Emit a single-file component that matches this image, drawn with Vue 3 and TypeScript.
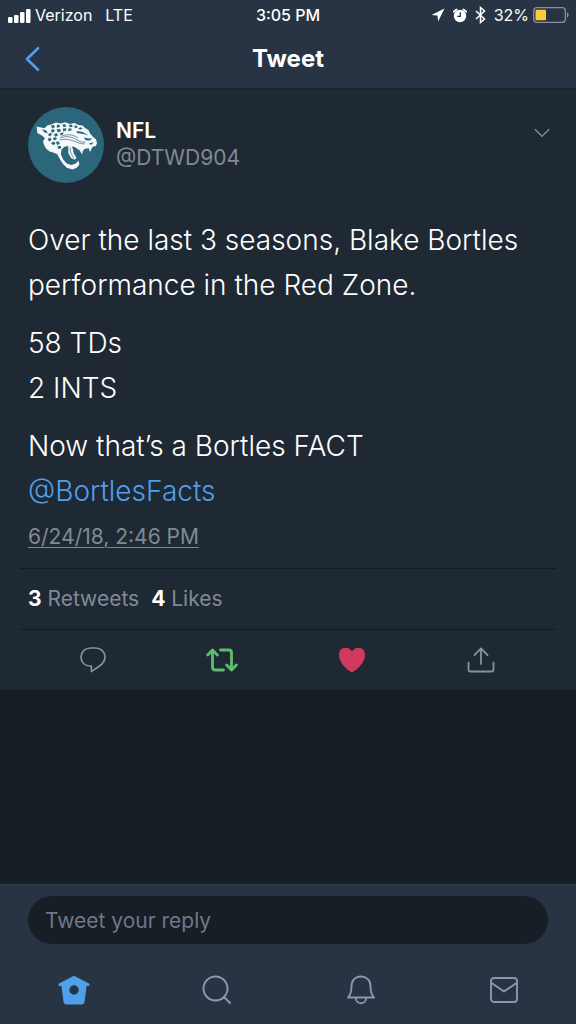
<script setup lang="ts">
import { ref } from 'vue'

interface Stat {
  count: number
  label: string
}

const stats: Stat[] = [
  { count: 3, label: 'Retweets' },
  { count: 4, label: 'Likes' },
]
const reply = ref('')
</script>

<template>
  <div class="screen">
    <header class="top">
      <div class="status">
        <div class="status-left">
          <svg class="signal" width="23" height="15" viewBox="0 0 23 15" aria-hidden="true">
            <rect x="0" y="9" width="4.5" height="6" rx="1.2" />
            <rect x="6" y="7" width="4.5" height="8" rx="1.2" />
            <rect x="12" y="4" width="4.5" height="11" rx="1.2" />
            <rect x="18" y="1" width="4.5" height="14" rx="1.2" />
          </svg>
          <span>Verizon</span>
          <span class="network">LTE</span>
        </div>
        <div class="clock">3:05 PM</div>
        <div class="status-right">
          <svg width="14" height="14" viewBox="0 0 14 14" aria-hidden="true">
            <path d="M13.5.5.5 7l6 .6.6 6z" fill="#fff" />
          </svg>
          <svg class="alarm" width="14" height="15" viewBox="0 0 14 15" aria-hidden="true">
            <circle cx="7" cy="8" r="6.2" fill="#fff" />
            <path d="M.8 3.8a9 9 0 0 1 2.800-2.300M13.200 3.800a9 9 0 0 0-2.800-2.300" fill="none" stroke="#fff" stroke-width="1.700" stroke-linecap="round" />
            <path d="M7.300 4.200v4.200H4.200" fill="none" stroke="#283444" stroke-width="1.300" />
          </svg>
          <svg class="bluetooth" width="11" height="18" viewBox="0 0 11 18" aria-hidden="true">
            <path d="M1 5l8.500 8L5.500 16.500v-15L9.500 5 1 13" fill="none" stroke="#fff" stroke-width="1.500" />
          </svg>
          <span>32%</span>
          <svg class="battery" width="36" height="16" viewBox="0 0 36 16" aria-hidden="true">
            <rect x=".7" y=".7" width="31.600" height="14.600" rx="3" fill="none" stroke="#8a929c" stroke-width="1.300" />
            <rect x="2.500" y="2.700" width="10.500" height="10.600" rx="1" fill="#fecb38" />
            <path d="M34 5.300q1.600.7 1.600 2.700T34 10.700z" fill="#8a929c" />
          </svg>
        </div>
      </div>
      <nav class="titlebar">
        <button class="back" type="button" aria-label="Back">
          <svg width="16" height="26" viewBox="0 0 16 26" aria-hidden="true">
            <path d="M14 2.200 3 13l11 10.800" fill="none" stroke="#4f9fea" stroke-width="2.600" stroke-linecap="round" stroke-linejoin="round" />
          </svg>
        </button>
        <h1>Tweet</h1>
      </nav>
    </header>

    <main class="content">
      <article class="tweet">
        <div class="author">
          <svg class="avatar" viewBox="24 20 229 229" role="img" aria-label="NFL avatar">
            <circle cx="138.500" cy="134.500" r="114.500" fill="#2b667a" />
            <path fill="#f4f8fa" d="M50 79l24 5 8-8 14-4 12-5 14 3 14-4 14 5 14-3 12 6 12 2 8 7 10 6 5 11 10 11 8 6 3 12-4 9-8 1-5 7-4 10-4-12-12 2-6 7-2 10-7-12-14-10-18-4-14 3-9 8-2 14 7 16 11 12 13 5 14-5 8-9 3 12-8 10-13 5-17-5-12-12-11-17-6-12-12-5-11-3-10-8-6-10-4-12 6-10-9-8-14-8z" />
            <path fill="#f4f8fa" d="M145 136l10 1 4 9 3 14 8 13-5 6-11-5-8-13z" />
            <g fill="#2b667a">
              <path d="M65 87l14 4 5 8-10-2zM93 76l9-2 3 7-8 4zM112 73l8 1-1 7-9 1zM128 73l9-1 2 7-8 2zM147 74l10-1 1 7-8 1zM164 75l9 3-1 6-8-2zM92 91l8-5 5 5-6 7zM110 87l11-1 2 7-9 4zM129 85l10-1 0 7-9 3zM146 85l10 0-2 6-9 2zM84 104l7-7 5 5-5 7zM102 102l9-3 4 6-9 5zM121 98l10-1-1 5-8 4zM83 117l7-5 5 6-6 7zM99 113l10-2 2 6-9 4zM93 129l9-5 5 5-6 6zM108 125l9-1 3 6-8 5zM112 139l9-3 4 7-8 4zM181 81l8 3-6 4-8-2z" />
              <path d="M171 92l18 3 17 11-15-5-20-3zM192 112l15 3 11-1-8 7-12-1zM209 129l13-3-5 6-7 2z" />
            </g>
            <path fill="none" stroke="#2b667a" stroke-width="2" d="M121 113c20-7 35-3 48 5s20 8 28 8M119 119c20-4 35 0 49 6s18 6 27 6M124 108c24-8 38-4 51 6" />
            <path fill="none" stroke="#2b667a" stroke-width="2" d="M151 142c0 14 4 23 12 32" />
          </svg>
          <div class="names">
            <strong>NFL</strong>
            <span>@DTWD904</span>
          </div>
          <button class="more" type="button" aria-label="More options">
            <svg width="16" height="10" viewBox="0 0 16 10" aria-hidden="true">
              <path d="M1.200 1.500 8 8.200l6.800-6.700" fill="none" stroke="#7d8996" stroke-width="1.500" stroke-linecap="round" stroke-linejoin="round" />
            </svg>
          </button>
        </div>

        <div class="body">
          <p>Over the last 3 seasons, Blake Bortles performance in the Red Zone.</p>
          <p>58 TDs<br />2 INTS</p>
          <p>Now that’s a Bortles FACT<br /><a href="#BortlesFacts">@BortlesFacts</a></p>
        </div>
        <div class="date"><a href="#tweet">6/24/18, 2:46 PM</a></div>

        <div class="stats">
          <span v-for="stat in stats" :key="stat.label"><b>{{ stat.count }}</b> {{ stat.label }}</span>
        </div>

        <div class="actions">
          <button type="button" aria-label="Reply">
            <svg width="26" height="26" viewBox="0 0 26 26" aria-hidden="true">
              <path d="M10.500 1h5C21 1 25 5 25 10c0 3.800-2.200 6.700-5.600 9-2.500 1.800-5.300 3.700-8 5.600V19H10C4.800 19 1 15.300 1 10.200S5 1 10.500 1z" fill="none" stroke="#8491a0" stroke-width="1.700" stroke-linejoin="round" />
            </svg>
          </button>
          <button type="button" aria-label="Retweet">
            <svg width="32" height="26" viewBox="0 0 32 26" aria-hidden="true">
              <g fill="none" stroke="#5dbb6d" stroke-width="2.900" stroke-linecap="round" stroke-linejoin="round">
                <path d="M1.700 8 6.500 3l4.800 5M6.500 4v16.300q0 2.700 2.700 2.700h8.300" />
                <path d="M30.300 18l-4.800 5-4.800-5M25.500 22V5.700Q25.500 3 22.800 3h-8.300" />
              </g>
            </svg>
          </button>
          <button type="button" aria-label="Like">
            <svg width="28" height="26" viewBox="0 0 28 26" aria-hidden="true">
              <path d="M14 4.300C15.600 1.900 18 .8 20.500.8 24.500.8 27 3.900 27 7.700c0 6.800-5.500 13.500-13 17.800C6.500 21.200 1 14.500 1 7.700 1 3.900 3.500.8 7.500.8 10 .8 12.400 1.900 14 4.300z" fill="#d13a5e" />
            </svg>
          </button>
          <button type="button" aria-label="Share">
            <svg width="28" height="26" viewBox="0 0 28 26" aria-hidden="true">
              <path d="M14 17V1.500M7.500 8 14 1.300 20.500 8M1.500 15.500v7q0 2 2 2h21q2 0 2-2v-7" fill="none" stroke="#8491a0" stroke-width="1.800" stroke-linecap="round" stroke-linejoin="round" />
            </svg>
          </button>
        </div>
      </article>
    </main>

    <footer class="bottom">
      <form class="reply" @submit.prevent>
        <input v-model="reply" type="text" aria-label="Tweet your reply" placeholder="Tweet your reply" />
      </form>
      <nav class="tabs">
        <button type="button" aria-label="Home">
          <svg width="32" height="30" viewBox="0 0 32 30" aria-hidden="true">
            <path fill="#4f9fea" fill-rule="evenodd" d="M16 .8 31 8.600q.8.500.6 1.500t-1.500 1h-1.500l-2.100 16q-.3 2.400-2.700 2.400H8.200q-2.400 0-2.700-2.400l-2.100-16H1.900q-1.300 0-1.500-1t.6-1.500zM16 10.300a4.700 4.700 0 1 0 0 9.400 4.700 4.700 0 0 0 0-9.400z" />
          </svg>
        </button>
        <button type="button" aria-label="Search">
          <svg width="30" height="30" viewBox="0 0 30 30" aria-hidden="true">
            <g fill="none" stroke="#8a99ae" stroke-width="1.900" stroke-linecap="round">
              <circle cx="13.500" cy="13.500" r="12" />
              <path d="M22 22l6 6" />
            </g>
          </svg>
        </button>
        <button type="button" aria-label="Notifications">
          <svg width="28" height="30" viewBox="0 0 28 30" aria-hidden="true">
            <path d="M1 22.500c3-3 3.500-7 3.500-11.500C4.500 5.500 8.500 1.500 14 1.500s9.500 4 9.500 9.500c0 4.500.5 8.500 3.500 11.500zM8.700 22.700c0 3.300 2.300 5.500 5.300 5.500s5.300-2.200 5.300-5.500" fill="none" stroke="#8a99ae" stroke-width="1.900" stroke-linejoin="round" />
          </svg>
        </button>
        <button type="button" aria-label="Messages">
          <svg width="28" height="26" viewBox="0 0 28 26" aria-hidden="true">
            <g fill="none" stroke="#8a99ae" stroke-width="1.900" stroke-linejoin="round">
              <rect x="1" y="1" width="26" height="24" rx="3" />
              <path d="M1.500 6 14 14.500 26.500 6" />
            </g>
          </svg>
        </button>
      </nav>
    </footer>
  </div>
</template>

<style>
html,
body {
  margin: 0;
  background: #171e25;
}
</style>

<style scoped>
.screen {
  display: flex;
  flex-direction: column;
  min-height: 100vh;
  background: #171e25;
  color: #fff;
  font-family: Inter, "Liberation Sans", sans-serif;
}

button {
  display: flex;
  align-items: center;
  justify-content: center;
  padding: 0;
  border: 0;
  background: none;
  cursor: pointer;
}

svg {
  display: block;
  flex: none;
}

.top {
  background: #283444;
  border-bottom: 1px solid #1a222d;
}

.status {
  display: grid;
  grid-template-columns: 1fr auto 1fr;
  align-items: center;
  height: 30px;
  padding: 0 8px;
  font-size: 16px;
  line-height: 20px;
}

.status-left,
.status-right {
  display: flex;
  align-items: center;
}

.status-left {
  gap: 4px;
}

.status-right {
  justify-content: flex-end;
  gap: 8px;
  margin-right: -1px;
}

.signal {
  fill: #fff;
}

.network {
  margin-left: 9px;
}

.battery {
  margin-left: -4px;
}

.clock {
  font-weight: 500;
}

.titlebar {
  display: grid;
  grid-template-columns: 1fr auto 1fr;
  align-items: center;
  height: 58px;
  padding: 0 24px;
}

.back {
  justify-self: start;
}

h1 {
  margin: 0;
  font-size: 24px;
  line-height: 30px;
  font-weight: 700;
}

.content {
  flex: 1;
}

.tweet {
  padding: 18px 20px 0;
  background: #1f2934;
  border-bottom: 1px solid #131a21;
}

.author {
  display: flex;
  align-items: center;
  gap: 12px;
  padding: 0 8px;
}

.avatar {
  width: 76px;
  height: 76px;
}

.names {
  display: flex;
  flex: 1;
  flex-direction: column;
  padding-bottom: 2px;
  font-size: 21px;
  line-height: 27px;
}

.names strong {
  font-weight: 600;
}

.names span,
.date a,
.stats {
  color: #808a95;
}

.more {
  align-self: flex-start;
  width: 16px;
  height: 52px;
  margin-right: -2px;
}

.body {
  margin-top: 35px;
  padding: 0 8px;
  font-size: 28px;
  line-height: 45px;
  font-weight: 300;
}

.body p {
  margin: 0 0 13px;
}

.body p:last-child {
  margin-bottom: 9px;
}

.body a {
  color: #4f9fea;
  text-decoration: none;
}

.date {
  padding: 0 8px 17px;
  font-size: 21px;
  line-height: 28px;
}

.date a {
  text-decoration: underline;
  text-decoration-thickness: 1px;
  text-underline-offset: 3px;
}

.stats {
  display: flex;
  gap: 12px;
  padding: 0 8px;
  border: solid #121a22;
  border-width: 1px 0;
  font-size: 21px;
  line-height: 60px;
}

.stats b {
  color: #fff;
  font-weight: 700;
}

.actions {
  display: grid;
  grid-template-columns: repeat(4, 1fr);
  height: 60px;
  padding: 0 10px 0 8px;
}

.bottom {
  position: sticky;
  bottom: 0;
  background: #283444;
  border-top: 1px solid #2d3a4a;
}

.reply {
  padding: 11px 28px 0;
}

.reply input {
  display: block;
  box-sizing: border-box;
  width: 100%;
  height: 48px;
  padding: 0 17px;
  border: 0;
  border-radius: 24px;
  outline: 0;
  background: #171e25;
  color: #fff;
  font: 400 21px/28px Inter, "Liberation Sans", sans-serif;
}

.reply input::placeholder {
  color: #6d7987;
  opacity: 1;
}

.tabs {
  display: grid;
  grid-template-columns: repeat(4, 1fr);
  height: 68px;
  padding: 12px 0 0 2px;
}
</style>
